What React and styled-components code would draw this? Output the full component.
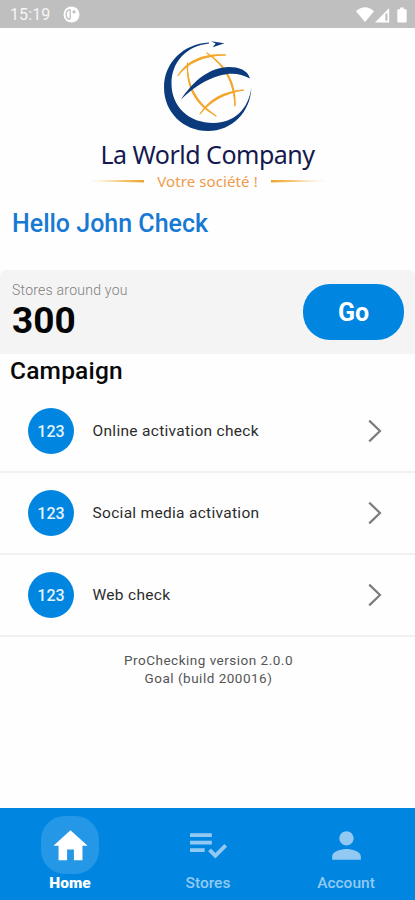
import React, { useState } from "react";
import styled, { createGlobalStyle } from "styled-components";

const campaigns = [
  { id: 1, count: 123, name: "Online activation check" },
  { id: 2, count: 123, name: "Social media activation" },
  { id: 3, count: 123, name: "Web check" },
];

const tabs = [
  { key: "home", label: "Home", Icon: HomeIcon },
  { key: "stores", label: "Stores", Icon: StoresIcon },
  { key: "account", label: "Account", Icon: AccountIcon },
];

function HomeIcon() {
  return (
    <svg width="41" height="41" viewBox="0 0 24 24" fill="currentColor">
      <path d="M10 20.6v-6.2h4v6.2h5v-8.4h3L12 3 2 12.2h3v8.4z" />
    </svg>
  );
}

function StoresIcon() {
  return (
    <svg width="44" height="44" viewBox="0 0 24 24" fill="currentColor">
      <path d="M2.2 5.6h11.900v2H2.200zM2.200 9.700h11.900v2H2.200zM2.200 13.800h8v2h-8z" />
      <path d="M20.900 11.400l-4.900 4.900-2.400-2.400-1.500 1.500 3.900 3.900 6.400-6.400z" />
    </svg>
  );
}

function AccountIcon() {
  return (
    <svg width="43" height="43" viewBox="0 0 24 24" fill="currentColor">
      <path d="M12 12c2.21 0 4-1.79 4-4s-1.79-4-4-4-4 1.79-4 4 1.79 4 4 4zm0 2c-2.67 0-8 1.34-8 4v2h16v-2c0-2.66-5.33-4-8-4z" />
    </svg>
  );
}

function StatusBar() {
  return (
    <Status>
      <span className="time">15:19</span>
      <svg width="17" height="17" viewBox="0 0 17 17">
        <circle cx="8.5" cy="8.5" r="8" fill="#fff" />
        <path
          d="M7.200 3.400v9.800M7 3.600C3.800 3.800 3.200 5.800 3.200 8.400s.8 4.600 3.800 4.800"
          fill="none"
          stroke="#bfbfbf"
          strokeWidth="1.3"
        />
        <circle cx="11" cy="5.800" r="1.600" fill="#bfbfbf" />
      </svg>
      <svg className="signals" width="54" height="18" viewBox="0 0 54 18">
        <path d="M0 5.2Q9 -2.8 18 5.2L9 16z" fill="#fff" />
        <path d="M19 16.5L33.2 2v14.5z" fill="#fff" />
        <path d="M29.3 8.6l2.1-2.2v8.4h-2.1z" fill="#bfbfbf" />
        <path
          d="M44.2 1.5h3.6v1.7h1.7q1.2 0 1.2 1.2v10.9q0 1.2-1.2 1.2h-7q-1.2 0-1.2-1.2V4.4q0-1.2 1.2-1.2h1.7z"
          fill="#fff"
        />
      </svg>
    </Status>
  );
}

function Globe() {
  return (
    <svg width="115" height="109" viewBox="0 0 115 109">
      {/* meridians and parallels */}
      <g fill="#f3a62b">
        <path d="M27 46.500C37 29 55 23 76 24.500v1C56 25.500 39 31 27 46.500z" />
        <path d="M37.500 31.500C37 55 47 75 67 86.500 45 77 34 54 37.500 31.500z" />
        <path d="M56 22.500C77 34 87 54 85.500 76.500h-1C84 53 75 35 56 22.500z" />
        <path d="M49.500 84.500C58 69 74 60.500 94 59.500v1C75 63.500 61 71.500 49.500 84.500z" />
      </g>
      <g
        fill="none"
        stroke="#f3a62b"
        strokeLinecap="round"
        strokeWidth="1.200"
      >
        <path d="M28 45.500Q43 26 75 25" />
        <path d="M37.500 33Q36 66 66 86" />
        <path d="M57 23Q84 42 85 75" />
        <path d="M50 84Q66 63 93 60" />
      </g>
      {/* orbit */}
      <path
        d="M59 12.600C33 14 14 33 14 57.500 14 82 33 101 58 101c24 0 42.500-19 43.300-43C98.500 79 84 93 63.500 93 39 93 21.500 77 21.500 53.500 21.500 32 36 16 59 13.400z"
        fill="#0c3b7d"
      />
      <path d="M61 11.300l13.500 2-11.800 4 3-3.700z" fill="#0c3b7d" />
      <path
        d="M31 69.500C43 51 60 37 79 37c10 0 18.500 3 21 11.500C90 43 81 42.500 70 45.500 55 49.500 42 58.500 31 69.500z"
        fill="#0c3b7d"
      />
    </svg>
  );
}

export default function App() {
  const [activeTab, setActiveTab] = useState("home");

  return (
    <>
      <GlobalStyle />
      <Screen>
        <StatusBar />
        <Brand>
          <Globe />
          <h1>La World Company</h1>
          <div className="tagline">
            <Swoosh />
            <span>Votre société !</span>
            <Swoosh $flip />
          </div>
        </Brand>
        <Greeting>Hello John Check</Greeting>
        <StoresPanel>
          <div>
            <p className="label">Stores around you</p>
            <p className="total">300</p>
          </div>
          <GoButton>Go</GoButton>
        </StoresPanel>
        <SectionTitle>Campaign</SectionTitle>
        <CampaignList>
          {campaigns.map((campaign) => (
            <CampaignRow key={campaign.id}>
              <Count>{campaign.count}</Count>
              <CampaignName>{campaign.name}</CampaignName>
              <svg width="14" height="24" viewBox="0 0 14 24">
                <path
                  d="M1.200 1.600L12 12 1.200 22.400"
                  fill="none"
                  stroke="#7d7d7d"
                  strokeWidth="2.200"
                />
              </svg>
            </CampaignRow>
          ))}
        </CampaignList>
        <Version>
          <span>ProChecking version 2.0.0</span>
          <span>Goal (build 200016)</span>
        </Version>
        <TabBar>
          {tabs.map(({ key, label, Icon }) => (
            <Tab
              key={key}
              $active={key === activeTab}
              onClick={() => setActiveTab(key)}
            >
              <span className="icon">
                <Icon />
              </span>
              {label}
            </Tab>
          ))}
        </TabBar>
      </Screen>
    </>
  );
}

const GlobalStyle = createGlobalStyle`
  * {
    box-sizing: border-box;
  }
  body {
    margin: 0;
    background-color: #fff;
    font-family: Roboto, "Liberation Sans", sans-serif;
  }
  h1, h2, p, ul {
    margin: 0;
    padding: 0;
  }
  svg {
    display: block;
    flex-shrink: 0;
  }
`;

const Screen = styled.div`
  display: flex;
  flex-direction: column;
  width: 415px;
  height: 900px;
  overflow: hidden;
  background-color: #fefefe;
`;

const Status = styled.div`
  display: flex;
  align-items: center;
  height: 28px;
  padding: 1px 5px 0 10px;
  background-color: #bfbfbf;
  .time {
    width: 53px;
    color: #f5f5f5;
    font-size: 16px;
    letter-spacing: 0.1px;
  }
  .signals {
    margin-left: auto;
  }
`;

const Brand = styled.div`
  display: flex;
  flex-direction: column;
  align-items: center;
  height: 165px;
  padding-top: 2px;
  h1 {
    color: #14194f;
    font-family: "Noto Sans", sans-serif;
    font-size: 25px;
    font-weight: 400;
    line-height: 30px;
    letter-spacing: -0.5px;
    white-space: nowrap;
  }
  .tagline {
    display: flex;
    align-items: center;
    gap: 13px;
    color: #f09a4a;
    font-family: "Noto Sans", sans-serif;
    font-size: 15px;
    line-height: 24px;
    letter-spacing: 0.1px;
    white-space: nowrap;
  }
`;

const Swoosh = styled.i`
  width: 54px;
  height: 3px;
  background: linear-gradient(to right, #fff4df, #eda52c);
  clip-path: polygon(0 40%, 100% 0, 100% 100%, 0 60%);
  transform: ${({ $flip }) => ($flip ? "scaleX(-1)" : "none")};
`;

const Greeting = styled.h2`
  height: 77px;
  padding: 16px 12px 0;
  color: #1879d3;
  font-size: 25px;
  font-weight: 500;
  line-height: 30px;
`;

const StoresPanel = styled.div`
  display: flex;
  justify-content: space-between;
  height: 84px;
  padding: 11px 11px 0 12px;
  border-radius: 6px 6px 0 0;
  background-color: #f4f4f4;
  .label {
    color: #808080;
    font-size: 14px;
    font-weight: 300;
    line-height: 18px;
    letter-spacing: 0.25px;
  }
  .total {
    color: #050505;
    font-size: 37px;
    font-weight: 700;
    line-height: 44px;
  }
`;

const GoButton = styled.button`
  width: 101px;
  height: 56px;
  margin-top: 3px;
  padding: 1px 0 0;
  border: none;
  border-radius: 27px;
  background-color: #0086e0;
  color: white;
  font-family: inherit;
  font-size: 25px;
  font-weight: 700;
`;

const SectionTitle = styled.h2`
  height: 37px;
  padding: 2px 10px 0;
  color: #080808;
  font-size: 24.5px;
  font-weight: 500;
  line-height: 30px;
  letter-spacing: 0.2px;
`;

const CampaignList = styled.ul`
  list-style: none;
`;

const CampaignRow = styled.li`
  display: flex;
  align-items: center;
  height: 82px;
  padding: 0 33px 0 28px;
  border-bottom: 2px solid #f1f1f1;
  svg {
    margin-left: auto;
  }
`;

const Count = styled.span`
  display: flex;
  align-items: center;
  justify-content: center;
  width: 46px;
  height: 46px;
  margin-right: 18.5px;
  border-radius: 50%;
  background-color: #0086e0;
  color: #e4f2fc;
  font-size: 16px;
  font-weight: 500;
`;

const CampaignName = styled.span`
  color: #2c2c2c;
  font-size: 15.5px;
  letter-spacing: 0.3px;
`;

const Version = styled.div`
  display: flex;
  flex-direction: column;
  align-items: center;
  padding: 15px 0 0 2px;
  color: #555;
  font-size: 13.5px;
  line-height: 17.5px;
  letter-spacing: 0.5px;
`;

const TabBar = styled.nav`
  display: grid;
  grid-template-columns: repeat(3, 1fr);
  height: 92px;
  margin-top: auto;
  padding-left: 1px;
  background-color: #0086e0;
`;

const Tab = styled.button`
  display: flex;
  flex-direction: column;
  align-items: center;
  padding: 8px 0 0;
  border: none;
  background: none;
  color: ${({ $active }) => ($active ? "#fff" : "#91c9f3")};
  font-family: inherit;
  font-size: 15.5px;
  font-weight: ${({ $active }) => ($active ? 900 : 500)};
  line-height: 19px;
  .icon {
    display: flex;
    align-items: center;
    justify-content: center;
    width: 58px;
    height: 58px;
    border-radius: 24px;
    background-color: ${({ $active }) => ($active ? "#2498e6" : "transparent")};
  }
`;
